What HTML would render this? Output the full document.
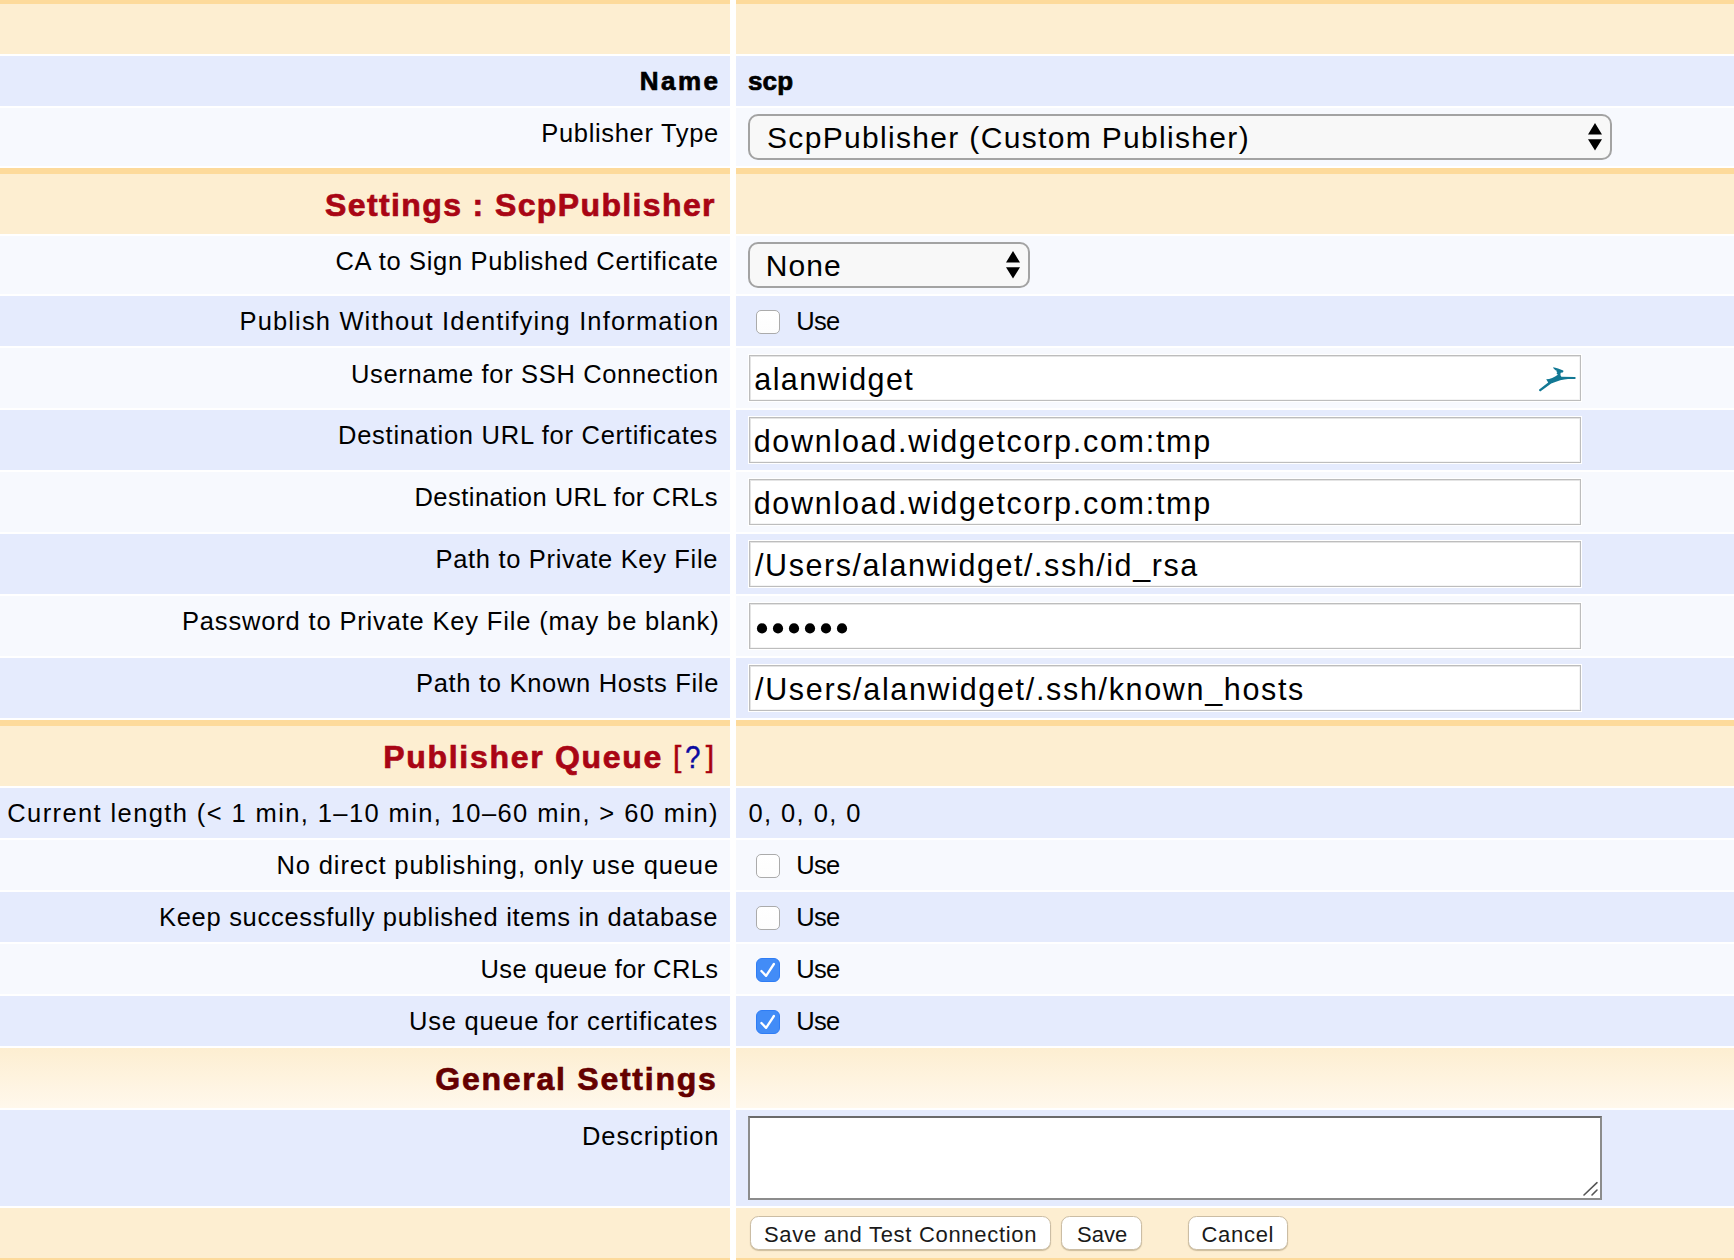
<!DOCTYPE html><html><head><meta charset="utf-8"><style>
*{margin:0;padding:0;box-sizing:border-box}
html,body{width:1734px;height:1260px;overflow:hidden;background:#fff}
body{position:relative;font-family:"Liberation Sans",sans-serif}
.c{position:absolute}
.t{position:absolute;white-space:pre}
.inp{position:absolute;left:749px;width:832px;height:46px;background:#fff;border:1px solid #bdbdbd;box-shadow:inset 1px 1px 0 #e4e4e4,inset -1px -1px 0 #f4f4f4,0 0 0 1px #fff}
.sel{position:absolute;left:748px;height:46px;background:#f8f8f8;border:2px solid #a3a3a3;border-radius:10px}
.cb{position:absolute;left:756px;width:24px;height:24px;border:1px solid #ababab;border-radius:5px;background:linear-gradient(#fff,#fdfdfd)}
.cbc{position:absolute;left:756px;width:24px;height:24px;border:1px solid #2f7df5;border-radius:6px;background:#428cf7}
.btn{position:absolute;top:1216px;height:33.5px;background:#fff;border:1px solid #cbbda4;border-radius:8.5px;box-shadow:0 1px 1px rgba(120,100,60,.35)}
</style></head><body>
<div class="c" style="left:0px;top:0px;width:730px;height:54px;background:#fdeed1;border-top:4px solid #fdda9b"></div>
<div class="c" style="left:736px;top:0px;width:998px;height:54px;background:#fdeed1;border-top:4px solid #fdda9b"></div>
<div class="c" style="left:0;top:56px;width:730px;height:50px;background:#e5ebfd"></div>
<div class="c" style="left:736px;top:56px;width:998px;height:50px;background:#e5ebfd"></div>
<div class="c" style="left:0;top:108px;width:730px;height:58px;background:#f7f9fe"></div>
<div class="c" style="left:736px;top:108px;width:998px;height:58px;background:#f7f9fe"></div>
<div class="c" style="left:0px;top:168px;width:730px;height:66px;background:#fdeed1;border-top:6px solid #fdda9b"></div>
<div class="c" style="left:736px;top:168px;width:998px;height:66px;background:#fdeed1;border-top:6px solid #fdda9b"></div>
<div class="c" style="left:0;top:236px;width:730px;height:58px;background:#f7f9fe"></div>
<div class="c" style="left:736px;top:236px;width:998px;height:58px;background:#f7f9fe"></div>
<div class="c" style="left:0;top:296px;width:730px;height:50px;background:#e5ebfd"></div>
<div class="c" style="left:736px;top:296px;width:998px;height:50px;background:#e5ebfd"></div>
<div class="c" style="left:0;top:348px;width:730px;height:60px;background:#f7f9fe"></div>
<div class="c" style="left:736px;top:348px;width:998px;height:60px;background:#f7f9fe"></div>
<div class="c" style="left:0;top:410px;width:730px;height:60px;background:#e5ebfd"></div>
<div class="c" style="left:736px;top:410px;width:998px;height:60px;background:#e5ebfd"></div>
<div class="c" style="left:0;top:472px;width:730px;height:60px;background:#f7f9fe"></div>
<div class="c" style="left:736px;top:472px;width:998px;height:60px;background:#f7f9fe"></div>
<div class="c" style="left:0;top:534px;width:730px;height:60px;background:#e5ebfd"></div>
<div class="c" style="left:736px;top:534px;width:998px;height:60px;background:#e5ebfd"></div>
<div class="c" style="left:0;top:596px;width:730px;height:60px;background:#f7f9fe"></div>
<div class="c" style="left:736px;top:596px;width:998px;height:60px;background:#f7f9fe"></div>
<div class="c" style="left:0;top:658px;width:730px;height:60px;background:#e5ebfd"></div>
<div class="c" style="left:736px;top:658px;width:998px;height:60px;background:#e5ebfd"></div>
<div class="c" style="left:0px;top:720px;width:730px;height:66px;background:#fdeed1;border-top:6px solid #fdda9b"></div>
<div class="c" style="left:736px;top:720px;width:998px;height:66px;background:#fdeed1;border-top:6px solid #fdda9b"></div>
<div class="c" style="left:0;top:788px;width:730px;height:50px;background:#e5ebfd"></div>
<div class="c" style="left:736px;top:788px;width:998px;height:50px;background:#e5ebfd"></div>
<div class="c" style="left:0;top:840px;width:730px;height:50px;background:#f7f9fe"></div>
<div class="c" style="left:736px;top:840px;width:998px;height:50px;background:#f7f9fe"></div>
<div class="c" style="left:0;top:892px;width:730px;height:50px;background:#e5ebfd"></div>
<div class="c" style="left:736px;top:892px;width:998px;height:50px;background:#e5ebfd"></div>
<div class="c" style="left:0;top:944px;width:730px;height:50px;background:#f7f9fe"></div>
<div class="c" style="left:736px;top:944px;width:998px;height:50px;background:#f7f9fe"></div>
<div class="c" style="left:0;top:996px;width:730px;height:50px;background:#e5ebfd"></div>
<div class="c" style="left:736px;top:996px;width:998px;height:50px;background:#e5ebfd"></div>
<div class="c" style="left:0px;top:1048px;width:730px;height:60px;background:linear-gradient(#fdeed1,#fff8ec)"></div>
<div class="c" style="left:736px;top:1048px;width:998px;height:60px;background:linear-gradient(#fdeed1,#fff8ec)"></div>
<div class="c" style="left:0;top:1110px;width:730px;height:96px;background:#e5ebfd"></div>
<div class="c" style="left:736px;top:1110px;width:998px;height:96px;background:#e5ebfd"></div>
<div class="c" style="left:0px;top:1208px;width:730px;height:52px;background:#fdeed1;border-bottom:2px solid #fdda9b"></div>
<div class="c" style="left:736px;top:1208px;width:998px;height:52px;background:#fdeed1;border-bottom:2px solid #fdda9b"></div>
<div class="t" style="left:639.8px;top:55.0px;font-size:26px;font-weight:700;letter-spacing:2.433px;line-height:52px;color:#000;-webkit-text-stroke:0.7px #000;">Name</div>
<div class="t" style="left:541.3px;top:108.0px;font-size:25.5px;font-weight:400;letter-spacing:0.669px;line-height:51.0px;color:#000;">Publisher Type</div>
<div class="t" style="left:335.5px;top:236.0px;font-size:25.5px;font-weight:400;letter-spacing:0.677px;line-height:51.0px;color:#000;">CA to Sign Published Certificate</div>
<div class="t" style="left:239.5px;top:296.0px;font-size:25.5px;font-weight:400;letter-spacing:1.145px;line-height:51.0px;color:#000;">Publish Without Identifying Information</div>
<div class="t" style="left:351.0px;top:348.5px;font-size:25.5px;font-weight:400;letter-spacing:0.654px;line-height:51.0px;color:#000;">Username for SSH Connection</div>
<div class="t" style="left:338.0px;top:410.0px;font-size:25.5px;font-weight:400;letter-spacing:0.742px;line-height:51.0px;color:#000;">Destination URL for Certificates</div>
<div class="t" style="left:414.5px;top:472.0px;font-size:25.5px;font-weight:400;letter-spacing:0.457px;line-height:51.0px;color:#000;">Destination URL for CRLs</div>
<div class="t" style="left:435.5px;top:534.0px;font-size:25.5px;font-weight:400;letter-spacing:0.674px;line-height:51.0px;color:#000;">Path to Private Key File</div>
<div class="t" style="left:182.0px;top:596.0px;font-size:25.5px;font-weight:400;letter-spacing:0.833px;line-height:51.0px;color:#000;">Password to Private Key File (may be blank)</div>
<div class="t" style="left:416.0px;top:658.0px;font-size:25.5px;font-weight:400;letter-spacing:0.696px;line-height:51.0px;color:#000;">Path to Known Hosts File</div>
<div class="t" style="left:7.3px;top:788.0px;font-size:25.5px;font-weight:400;letter-spacing:1.393px;line-height:51.0px;color:#000;">Current length (&lt; 1 min, 1–10 min, 10–60 min, &gt; 60 min)</div>
<div class="t" style="left:276.5px;top:840.0px;font-size:25.5px;font-weight:400;letter-spacing:0.871px;line-height:51.0px;color:#000;">No direct publishing, only use queue</div>
<div class="t" style="left:159.0px;top:892.0px;font-size:25.5px;font-weight:400;letter-spacing:0.705px;line-height:51.0px;color:#000;">Keep successfully published items in database</div>
<div class="t" style="left:480.5px;top:944.0px;font-size:25.5px;font-weight:400;letter-spacing:0.382px;line-height:51.0px;color:#000;">Use queue for CRLs</div>
<div class="t" style="left:409.0px;top:996.0px;font-size:25.5px;font-weight:400;letter-spacing:0.760px;line-height:51.0px;color:#000;">Use queue for certificates</div>
<div class="t" style="left:582.0px;top:1111.0px;font-size:25.5px;font-weight:400;letter-spacing:0.900px;line-height:51.0px;color:#000;">Description</div>
<div class="t" style="left:325.1px;top:173.0px;font-size:32px;font-weight:700;letter-spacing:1.377px;line-height:64px;color:#a90514;-webkit-text-stroke:0.7px #a90514;">Settings : ScpPublisher</div>
<div class="t" style="left:383.2px;top:725.0px;font-size:32px;font-weight:700;letter-spacing:1.700px;line-height:64px;color:#a90514;-webkit-text-stroke:0.7px #a90514;">Publisher Queue</div>
<div class="t" style="left:673px;top:727px;font-size:30px;line-height:60px;color:#a80010;-webkit-text-stroke:0.5px #a80010">[</div>
<div class="t" style="left:705.8px;top:727px;font-size:30px;line-height:60px;color:#a80010;-webkit-text-stroke:0.5px #a80010">]</div>
<div class="t" style="left:684.4px;top:725px;font-size:32px;line-height:64px;color:#0a0aa0;transform:scaleX(0.85);-webkit-text-stroke:0.5px #0a0aa0">?</div>
<div class="t" style="left:435.3px;top:1046.8px;font-size:32px;font-weight:700;letter-spacing:1.747px;line-height:64px;color:#650000;-webkit-text-stroke:0.7px #650000;">General Settings</div>
<div class="t" style="left:747.9px;top:55.0px;font-size:26px;font-weight:700;letter-spacing:0.250px;line-height:52px;color:#000;-webkit-text-stroke:0.7px #000;">scp</div>
<div class="sel" style="top:114px;width:864px"></div>
<div class="t" style="left:767.0px;top:107.8px;font-size:30px;font-weight:400;letter-spacing:1.327px;line-height:60px;color:#000;">ScpPublisher (Custom Publisher)</div>
<svg class="c" style="left:1586px;top:121px" width="18" height="32" viewBox="0 0 18 32"><path d="M2 13.4 L16 13.4 L9 2 Z M2 18.3 L16 18.3 L9 29.4 Z" fill="#000"/></svg>
<div class="sel" style="top:242px;width:282px"></div>
<div class="t" style="left:765.7px;top:236.3px;font-size:30px;font-weight:400;letter-spacing:1.100px;line-height:60px;color:#000;">None</div>
<svg class="c" style="left:1004px;top:249px" width="18" height="32" viewBox="0 0 18 32"><path d="M2 13.4 L16 13.4 L9 2 Z M2 18.3 L16 18.3 L9 29.4 Z" fill="#000"/></svg>
<div class="cb" style="top:310px"></div>
<div class="t" style="left:796.3px;top:296.0px;font-size:25.5px;font-weight:400;letter-spacing:-0.750px;line-height:51.0px;color:#000">Use</div>
<div class="cb" style="top:854px"></div>
<div class="t" style="left:796.3px;top:840.0px;font-size:25.5px;font-weight:400;letter-spacing:-0.750px;line-height:51.0px;color:#000">Use</div>
<div class="cb" style="top:906px"></div>
<div class="t" style="left:796.3px;top:892.0px;font-size:25.5px;font-weight:400;letter-spacing:-0.750px;line-height:51.0px;color:#000">Use</div>
<div class="cbc" style="top:958px"></div>
<svg class="c" style="left:756px;top:958px" width="24" height="24" viewBox="0 0 24 24"><path d="M5.4 13.0 L10.1 17.9 L17.9 6.0" fill="none" stroke="#fff" stroke-width="2.3" stroke-linecap="round" stroke-linejoin="round"/></svg>
<div class="t" style="left:796.3px;top:944.0px;font-size:25.5px;font-weight:400;letter-spacing:-0.750px;line-height:51.0px;color:#000">Use</div>
<div class="cbc" style="top:1010px"></div>
<svg class="c" style="left:756px;top:1010px" width="24" height="24" viewBox="0 0 24 24"><path d="M5.4 13.0 L10.1 17.9 L17.9 6.0" fill="none" stroke="#fff" stroke-width="2.3" stroke-linecap="round" stroke-linejoin="round"/></svg>
<div class="t" style="left:796.3px;top:996.0px;font-size:25.5px;font-weight:400;letter-spacing:-0.750px;line-height:51.0px;color:#000">Use</div>
<div class="inp" style="top:355px"></div>
<div class="inp" style="top:417px"></div>
<div class="inp" style="top:479px"></div>
<div class="inp" style="top:541px"></div>
<div class="inp" style="top:603px"></div>
<div class="inp" style="top:665px"></div>
<div class="t" style="left:754.3px;top:348.8px;font-size:30.5px;font-weight:400;letter-spacing:1.411px;line-height:61.0px;color:#000;">alanwidget</div>
<div class="t" style="left:753.7px;top:410.8px;font-size:30.5px;font-weight:400;letter-spacing:1.712px;line-height:61.0px;color:#000">download.widgetcorp.com:tmp</div>
<div class="t" style="left:753.7px;top:472.8px;font-size:30.5px;font-weight:400;letter-spacing:1.712px;line-height:61.0px;color:#000">download.widgetcorp.com:tmp</div>
<div class="t" style="left:755.0px;top:534.8px;font-size:30.5px;font-weight:400;letter-spacing:1.564px;line-height:61.0px;color:#000;">/Users/alanwidget/.ssh/id_rsa</div>
<svg class="c" style="left:749px;top:616px" width="120" height="24"><circle cx="13.0" cy="12.4" r="5.1" fill="#000"/><circle cx="29.0" cy="12.4" r="5.1" fill="#000"/><circle cx="45.0" cy="12.4" r="5.1" fill="#000"/><circle cx="61.0" cy="12.4" r="5.1" fill="#000"/><circle cx="77.0" cy="12.4" r="5.1" fill="#000"/><circle cx="93.0" cy="12.4" r="5.1" fill="#000"/></svg>
<div class="t" style="left:755.0px;top:658.8px;font-size:30.5px;font-weight:400;letter-spacing:1.667px;line-height:61.0px;color:#000;">/Users/alanwidget/.ssh/known_hosts</div>
<svg class="c" style="left:1536px;top:362px" width="44" height="32" viewBox="0 0 44 32"><path fill="#127894" d="M3.2 27.6 L12.2 20.4 L10.2 17.3 C14 17 18.5 15.5 21.8 12.7 L20.4 10.9 L21.4 10.6 L20.2 9.6 L21.2 9.0 C19.5 8.2 17.5 7.2 17.0 5.2 C20 5.5 24 7 27.2 8.4 C27.6 9 27.4 10.2 26.5 10.5 L24.8 10.8 C24.2 12 24.4 14 25.4 14.8 L38.8 15 C40 15 40 17 38.8 17 L32 17 C27 17.4 22 18.6 15.2 21.5 L4.6 29.3 C3.8 29.8 2.5 28.3 3.2 27.6 Z"/></svg>
<div class="t" style="left:748.4px;top:788.0px;font-size:25.5px;font-weight:400;letter-spacing:1.422px;line-height:51.0px;color:#000;">0, 0, 0, 0</div>
<div class="c" style="left:748px;top:1116px;width:854px;height:84px;background:#fff;border:2px solid #8c8c8c;border-top-color:#6a6a6a"></div>
<svg class="c" style="left:1580px;top:1180px" width="20" height="18"><path d="M4 12 L17 -0.3 M12 12 L17 7" stroke="#555" stroke-width="1.6" fill="none" stroke-linecap="round" transform="translate(0,3)"/></svg>
<div class="btn" style="left:749.6px;width:301px"></div>
<div class="btn" style="left:1061.2px;width:81px"></div>
<div class="btn" style="left:1187.5px;width:100.7px"></div>
<div class="t" style="left:764.0px;top:1213.0px;font-size:22px;font-weight:400;letter-spacing:0.696px;line-height:44px;color:#1a1a1a;">Save and Test Connection</div>
<div class="t" style="left:1077.0px;top:1213.0px;font-size:22px;font-weight:400;letter-spacing:0.000px;line-height:44px;color:#1a1a1a;">Save</div>
<div class="t" style="left:1201.5px;top:1213.0px;font-size:22px;font-weight:400;letter-spacing:0.700px;line-height:44px;color:#1a1a1a;">Cancel</div>
</body></html>
